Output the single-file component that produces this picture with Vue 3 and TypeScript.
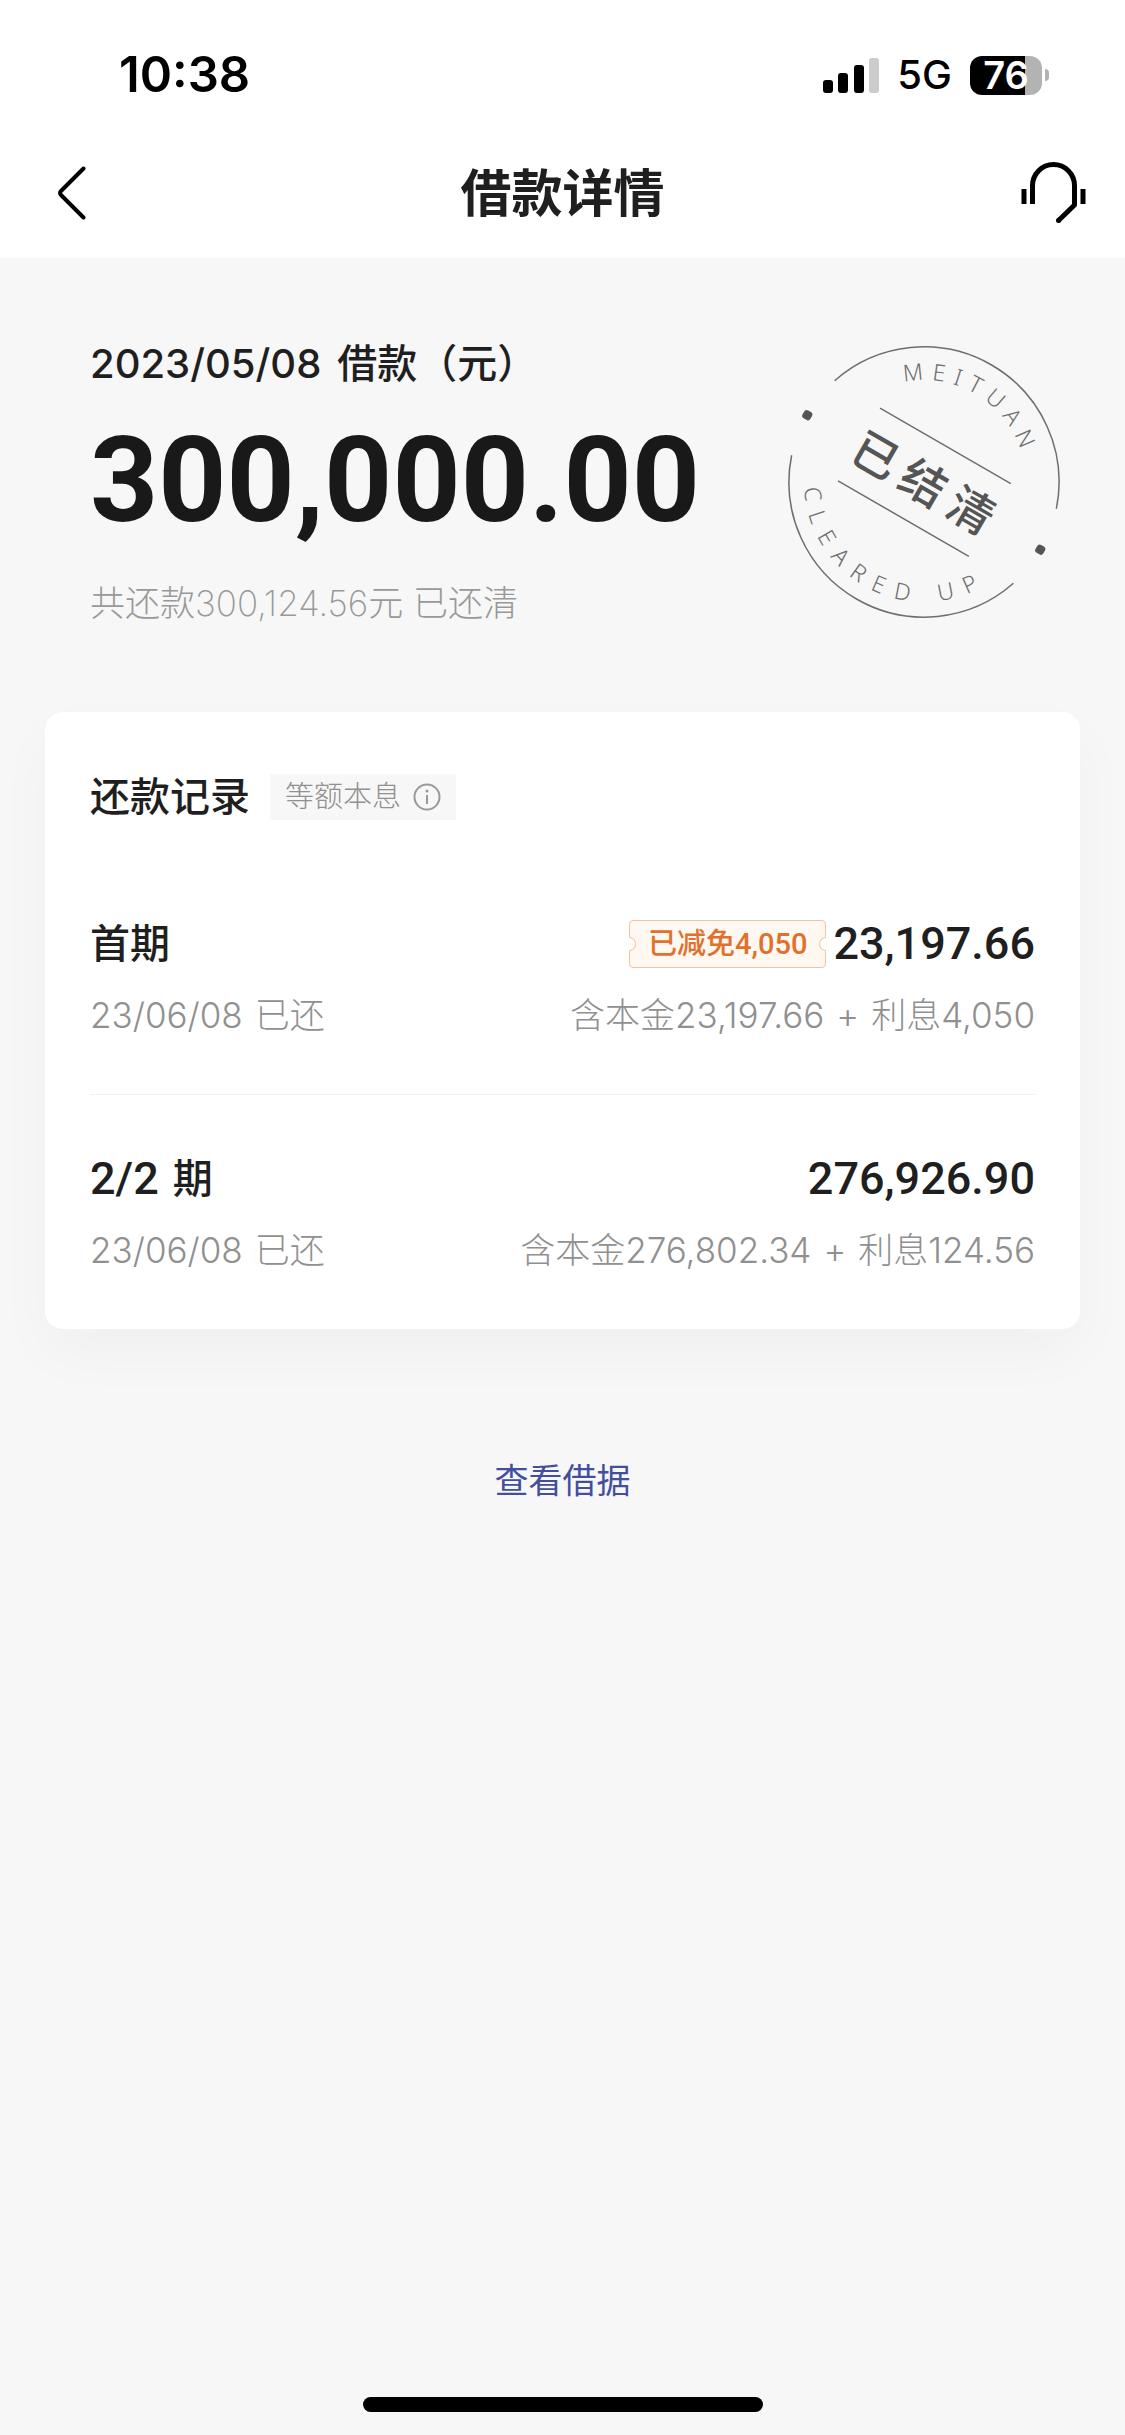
<script setup lang="ts">
interface Instalment {
  term: string
  unit: string
  date: string
  status: string
  amount: string
  waived?: string
  principal: string
  interest: string
}

const instalments: Instalment[] = [
  {
    term: '',
    unit: '首期',
    date: '23/06/08',
    status: '已还',
    amount: '23,197.66',
    waived: '已减免4,050',
    principal: '含本金23,197.66',
    interest: '利息4,050',
  },
  {
    term: '2/2',
    unit: '期',
    date: '23/06/08',
    status: '已还',
    amount: '276,926.90',
    principal: '含本金276,802.34',
    interest: '利息124.56',
  },
]

const signalBars = [
  { x: 0, height: 13, on: true },
  { x: 15, height: 20, on: true },
  { x: 31, height: 28, on: true },
  { x: 46, height: 35, on: false },
]

// Gap before every glyph but the first, for the lettering of the seal.
const gaps = (text: string, gap: number): string =>
  [...text].map((_, i) => (i === 0 ? 0 : gap)).join(' ')
</script>

<template>
  <div class="page">
    <header class="header">
      <div class="status-bar">
        <span class="clock">10:38</span>
        <div class="indicators">
          <svg class="signal" width="56" height="36" viewBox="0 0 56 36" aria-hidden="true">
            <rect
              v-for="bar in signalBars"
              :key="bar.x"
              :x="bar.x"
              :y="36 - bar.height"
              width="10"
              :height="bar.height"
              rx="3"
              :fill="bar.on ? '#000' : '#ccc'"
            />
          </svg>
          <span class="network">5G</span>
          <span class="battery"><span class="battery-body">76</span><span class="battery-tip"></span></span>
        </div>
      </div>
      <nav class="nav">
        <button class="nav-button back" type="button" aria-label="返回">
          <svg width="30" height="54" viewBox="0 0 30 54" fill="none" stroke="#000" stroke-width="4" stroke-linecap="round" stroke-linejoin="round">
            <path d="M26.500 2.500 4 25Q2 27 4 29L26.500 51.500" />
          </svg>
        </button>
        <h1 class="title">借款详情</h1>
        <button class="nav-button support" type="button" aria-label="客服">
          <svg width="65" height="64" viewBox="0 0 65 64" fill="none" stroke="#000" stroke-width="5">
            <path d="M11.500 43V24.500a21 21 0 0 1 42 0V44L37 60" stroke-linejoin="round" />
            <circle cx="37.500" cy="59.500" r="2.500" fill="#000" stroke="none" />
            <path d="M3 28v15M62 28v15" />
          </svg>
        </button>
      </nav>
    </header>

    <main class="content">
      <section class="summary">
        <div class="summary-text">
          <p class="loan-date"><span>2023/05/08</span><span>借款（元）</span></p>
          <p class="loan-amount">300,000.00</p>
          <p class="loan-note">共还款300,124.56元 已还清</p>
        </div>
        <svg class="seal" width="280" height="280" viewBox="-140 -140 280 280">
          <defs>
            <path id="seal-top" d="M-102 0A102 102 0 0 1 102 0" />
            <path id="seal-bottom" d="M-120 0A120 120 0 0 0 120 0" />
          </defs>
          <g transform="rotate(30)">
            <g fill="none" stroke="#6e6e6e" stroke-width="1.500">
              <path d="M-128 -43A135 135 0 0 1 128 -43" />
              <path d="M-128 43A135 135 0 0 0 128 43" />
              <path d="M-75 -42H76M-75 42H76" />
            </g>
            <rect x="-139" y="-4" width="9" height="9" rx="3" fill="#555" />
            <rect x="130" y="-4" width="9" height="9" rx="3" fill="#555" />
            <text class="seal-latin" :dx="gaps('MEITUAN', 8)">
              <textPath href="#seal-top" startOffset="50%">MEITUAN</textPath>
            </text>
            <text class="seal-latin" :dx="gaps('CLEARED UP', 12)">
              <textPath href="#seal-bottom" startOffset="50%">CLEARED UP</textPath>
            </text>
            <text class="seal-main" y="18" :dx="gaps('已结清', 9)">已结清</text>
          </g>
        </svg>
      </section>

      <section class="card">
        <div class="card-head">
          <h2 class="card-title">还款记录</h2>
          <button class="method" type="button">
            等额本息
            <svg width="28" height="28" viewBox="0 0 28 28" fill="none" stroke="#999" stroke-width="2" aria-hidden="true">
              <circle cx="14" cy="14" r="12.500" />
              <path d="M14 12v9" />
              <circle cx="14" cy="8" r="1.500" fill="#999" stroke="none" />
            </svg>
          </button>
        </div>
        <ul class="instalments">
          <li v-for="item in instalments" :key="item.amount" class="instalment">
            <div class="line main-line">
              <span class="term"><span v-if="item.term" class="figure">{{ item.term }}</span>{{ item.unit }}</span>
              <span class="sum">
                <span v-if="item.waived" class="coupon">{{ item.waived }}</span>
                <span class="figure">{{ item.amount }}</span>
              </span>
            </div>
            <div class="line sub-line">
              <span class="parts"><span>{{ item.date }}</span><span>{{ item.status }}</span></span>
              <span class="parts"><span>{{ item.principal }}</span><span>+</span><span>{{ item.interest }}</span></span>
            </div>
          </li>
        </ul>
      </section>

      <a class="receipt" href="#receipt">查看借据</a>
    </main>

    <div class="home-indicator"></div>
  </div>
</template>

<style>
body {
  margin: 0;
  background: #f7f7f7;
}
</style>

<style scoped>
.page {
  display: flex;
  flex-direction: column;
  min-height: 100vh;
  box-sizing: border-box;
  padding-bottom: 23px;
  background: #f7f7f7;
  color: #1f1f1f;
  font-family: Inter, "Noto Sans CJK SC", sans-serif;
}

h1,
h2,
p,
ul {
  margin: 0;
  padding: 0;
}

button {
  padding: 0;
  border: 0;
  background: none;
  font-family: inherit;
}

svg {
  display: block;
}

.header {
  background: #fff;
}

.status-bar {
  display: flex;
  align-items: center;
  justify-content: space-between;
  height: 60px;
  padding: 45px 76px 23px 119px;
  color: #000;
}

.clock {
  font-size: 49px;
  font-weight: 600;
  line-height: 60px;
}

.indicators {
  display: flex;
  align-items: center;
}

.network {
  margin: 0 18px;
  font-size: 40px;
  font-weight: 500;
  line-height: 60px;
}

.battery {
  display: flex;
  align-items: center;
  gap: 3px;
}

.battery-body {
  width: 72px;
  border-radius: 12px;
  background: linear-gradient(90deg, #000 76%, #b3b3b3 76%);
  color: #fff;
  font-size: 38px;
  font-weight: 600;
  line-height: 39px;
  text-align: center;
}

.battery-tip {
  width: 4px;
  height: 12px;
  border-radius: 0 6px 6px 0;
  background: #b3b3b3;
}

.nav {
  display: flex;
  align-items: center;
  justify-content: space-between;
  height: 130px;
  padding: 0 39px 0 57px;
}

.nav-button {
  display: flex;
  flex: 1;
}

.support {
  justify-content: flex-end;
}

.title {
  padding: 2px 18px 0 0;
  font-size: 51px;
  font-weight: 700;
  line-height: 60px;
}

.summary {
  display: flex;
  align-items: center;
  justify-content: space-between;
  padding: 78px 61px 85px 90px;
}

.loan-date {
  display: flex;
  gap: 16px;
  font-size: 40px;
  font-weight: 500;
  line-height: 56px;
}

.loan-amount {
  margin: 29px 0 38px;
  color: #191919;
  font-family: Roboto, sans-serif;
  font-size: 119px;
  font-weight: 700;
  line-height: 120px;
}

.loan-note {
  color: #999;
  font-size: 35px;
  font-weight: 200;
  line-height: 48px;
}

.seal-latin {
  fill: #6e6e6e;
  font-family: "Noto Sans", sans-serif;
  font-size: 23px;
  font-weight: 300;
  text-anchor: middle;
}

.seal-main {
  fill: #555;
  font-family: "Noto Sans CJK SC", sans-serif;
  font-size: 46px;
  font-weight: 500;
  text-anchor: middle;
}

.card {
  margin: 0 45px;
  padding: 62px 45px 55px;
  border-radius: 18px;
  background: #fff;
  box-shadow: 0 24px 60px rgba(0, 0, 0, 0.03);
}

.card-head {
  display: flex;
  align-items: center;
  gap: 20px;
}

.card-title {
  font-size: 40px;
  font-weight: 500;
  line-height: 46px;
}

.method {
  display: flex;
  align-items: center;
  gap: 12px;
  padding: 0 15px;
  background: #f7f7f7;
  color: #909090;
  font-size: 29px;
  font-weight: 300;
  line-height: 46px;
}

.instalments {
  padding-top: 100px;
  list-style: none;
}

.instalment + .instalment {
  margin-top: 55px;
  padding-top: 60px;
  border-top: 1px solid #f0f0f0;
}

.line {
  display: flex;
  align-items: center;
  justify-content: space-between;
}

.main-line {
  font-size: 40px;
  font-weight: 500;
  line-height: 48px;
}

.sub-line {
  margin-top: 23px;
  color: #909090;
  font-size: 35px;
  font-weight: 300;
  line-height: 48px;
}

.term,
.sum,
.parts {
  display: flex;
  align-items: center;
}

.term {
  gap: 14px;
}

.sum {
  gap: 7px;
}

.parts {
  gap: 12px;
}

.figure {
  font-family: Roboto, sans-serif;
  font-size: 45px;
}

.coupon {
  position: relative;
  box-sizing: border-box;
  height: 48px;
  padding: 0 18px;
  border: 1px solid #f2c4a2;
  border-radius: 4px;
  background: #fff8f1;
  color: #e2702d;
  font-family: Roboto, "Noto Sans CJK SC", sans-serif;
  font-size: 29px;
  line-height: 46px;
}

.coupon::before,
.coupon::after {
  position: absolute;
  top: 16px;
  box-sizing: border-box;
  width: 7px;
  height: 14px;
  border: 1px solid #f2c4a2;
  background: #fff;
  content: "";
}

.coupon::before {
  left: -1px;
  border-left: 0;
  border-radius: 0 7px 7px 0;
}

.coupon::after {
  right: -1px;
  border-right: 0;
  border-radius: 7px 0 0 7px;
}

.content {
  display: flex;
  flex-direction: column;
}

.receipt {
  align-self: center;
  margin: 128px 0 60px;
  color: #434f9d;
  font-size: 34px;
  line-height: 48px;
  text-decoration: none;
}

.home-indicator {
  align-self: center;
  width: 400px;
  height: 15px;
  margin-top: auto;
  border-radius: 8px;
  background: #000;
}
</style>
